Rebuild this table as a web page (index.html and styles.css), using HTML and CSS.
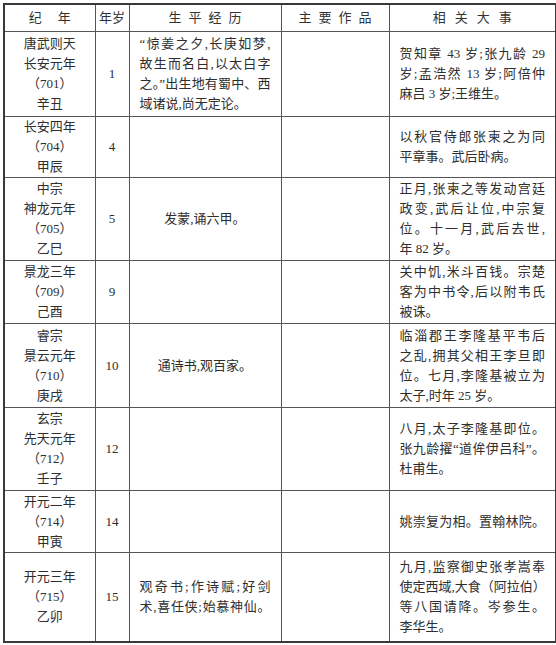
FILE: index.html
```html
<!DOCTYPE html>
<html lang="zh-CN">
<head>
<meta charset="utf-8">
<title>李白年谱</title>
<link rel="stylesheet" href="styles.css">
</head>
<body>
<table class="chrono">
  <colgroup>
    <col class="c1"><col class="c2"><col class="c3"><col class="c4"><col class="c5">
  </colgroup>
  <thead>
    <tr class="hd">
      <th class="h1">纪年</th>
      <th class="h2">年岁</th>
      <th class="h3">生平经历</th>
      <th class="h4">主要作品</th>
      <th class="h5">相关大事</th>
    </tr>
  </thead>
  <tbody>
    <tr class="r1">
      <td class="era">唐武则天<br>长安元年<br>（701）<br>辛丑</td>
      <td class="age">1</td>
      <td class="txt"><div class="ln">“惊姜之夕,长庚如梦,</div><div class="ln">故生而名白,以太白字</div><div class="ln">之。”出生地有蜀中、西</div><div class="ln end">域诸说,尚无定论。</div></td>
      <td class="txt"></td>
      <td class="txt"><div class="ln">贺知章 43 岁;张九龄 29</div><div class="ln">岁;孟浩然 13 岁;阿倍仲</div><div class="ln end">麻吕 3 岁;王维生。</div></td>
    </tr>
    <tr class="r2">
      <td class="era">长安四年<br>（704）<br>甲辰</td>
      <td class="age">4</td>
      <td class="txt"></td>
      <td class="txt"></td>
      <td class="txt"><div class="ln">以秋官侍郎张柬之为同</div><div class="ln end">平章事。武后卧病。</div></td>
    </tr>
    <tr class="r3">
      <td class="era">中宗<br>神龙元年<br>（705）<br>乙巳</td>
      <td class="age">5</td>
      <td class="txt ctr">发蒙,诵六甲。</td>
      <td class="txt"></td>
      <td class="txt"><div class="ln">正月,张柬之等发动宫廷</div><div class="ln">政变,武后让位,中宗复</div><div class="ln">位。十一月,武后去世,</div><div class="ln end">年 82 岁。</div></td>
    </tr>
    <tr class="r4">
      <td class="era">景龙三年<br>（709）<br>己酉</td>
      <td class="age">9</td>
      <td class="txt"></td>
      <td class="txt"></td>
      <td class="txt"><div class="ln">关中饥,米斗百钱。宗楚</div><div class="ln">客为中书令,后以附韦氏</div><div class="ln end">被诛。</div></td>
    </tr>
    <tr class="r5">
      <td class="era">睿宗<br>景云元年<br>（710）<br>庚戌</td>
      <td class="age">10</td>
      <td class="txt ctr">通诗书,观百家。</td>
      <td class="txt"></td>
      <td class="txt"><div class="ln">临淄郡王李隆基平韦后</div><div class="ln">之乱,拥其父相王李旦即</div><div class="ln">位。七月,李隆基被立为</div><div class="ln end">太子,时年 25 岁。</div></td>
    </tr>
    <tr class="r6">
      <td class="era">玄宗<br>先天元年<br>（712）<br>壬子</td>
      <td class="age">12</td>
      <td class="txt"></td>
      <td class="txt"></td>
      <td class="txt"><div class="ln">八月,太子李隆基即位。</div><div class="ln">张九龄擢“道侔伊吕科”。</div><div class="ln end">杜甫生。</div></td>
    </tr>
    <tr class="r7">
      <td class="era">开元二年<br>（714）<br>甲寅</td>
      <td class="age">14</td>
      <td class="txt"></td>
      <td class="txt"></td>
      <td class="txt"><div class="ln">姚崇复为相。置翰林院。</div></td>
    </tr>
    <tr class="r8">
      <td class="era">开元三年<br>（715）<br>乙卯</td>
      <td class="age">15</td>
      <td class="txt"><div class="ln">观奇书;作诗赋;好剑</div><div class="ln">术,喜任侠;始慕神仙。</div></td>
      <td class="txt"></td>
      <td class="txt"><div class="ln">九月,监察御史张孝嵩奉</div><div class="ln">使定西域,大食（阿拉伯）</div><div class="ln">等八国请降。岑参生。</div><div class="ln end">李华生。</div></td>
    </tr>
  </tbody>
</table>
</body>
</html>
```

FILE: styles.css
```css
html, body {
  margin: 0;
  padding: 0;
  background: #ffffff;
}

body {
  padding: 3px 0 0 3px;
  font-family: "Liberation Serif", "Noto Sans CJK SC", serif;
  font-size: 13px;
  line-height: 20px;
  color: #2e2e2e;
}

.chrono {
  border-collapse: collapse;
  table-layout: fixed;
  width: 552px;
  border: 2px solid #3a3a3a;
}

.c1 { width: 91px; }
.c2 { width: 34px; }
.c3 { width: 152px; }
.c4 { width: 108px; }
.c5 { width: 167px; }

.chrono th,
.chrono td {
  border: 1px solid #555555;
  padding: 0;
  vertical-align: middle;
}

.chrono th {
  font-weight: normal;
  text-align: center;
  height: 26px;
  color: #333333;
}

.h1 { letter-spacing: 16px; text-indent: 16px; }
.h2 { letter-spacing: 0; }
.h3 { letter-spacing: 7px; text-indent: 7px; }
.h4 { letter-spacing: 7px; text-indent: 7px; }
.h5 { letter-spacing: 9px; text-indent: 9px; }

.era,
.age {
  text-align: center;
}

.txt {
  padding: 0 10px !important;
}

.ctr {
  text-align: center;
}

.ln {
  text-align: justify;
  text-align-last: justify;
  white-space: nowrap;
}

.ln.end {
  text-align-last: left;
}

.r1 { height: 85px; }
.r2 { height: 59px; }
.r3 { height: 83px; }
.r4 { height: 63px; }
.r5 { height: 84px; }
.r6 { height: 83px; }
.r7 { height: 62px; }
.r8 { height: 89px; }
```
